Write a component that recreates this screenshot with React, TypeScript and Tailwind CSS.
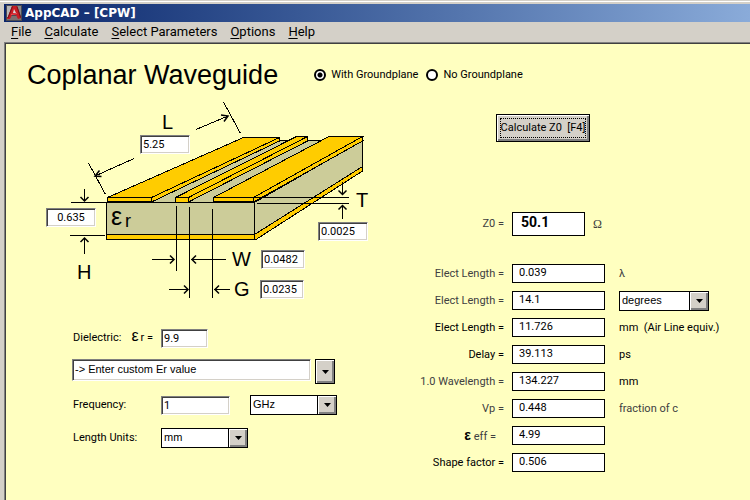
import { useState } from "react";
import type { ReactNode } from "react";

const MENU_ITEMS = ["File", "Calculate", "Select Parameters", "Options", "Help"];

const SUNKEN =
  "bg-white border border-t-[#808080] border-l-[#808080] border-b-white border-r-white shadow-[inset_1px_1px_0_#404040,inset_-1px_-1px_0_#d4d0c8] outline-none";
const RAISED =
  "bg-[#d4d0c8] shadow-[inset_1px_1px_0_#ffffff,inset_-2px_-2px_0_#808080]";

type Result = {
  id: string;
  label: ReactNode;
  value: string;
  unit?: string;
  muted?: boolean;
  mutedUnit?: boolean;
};

const RESULTS: Result[] = [
  { id: "elect-lambda", label: "Elect Length =", value: "0.039", unit: "λ", muted: true, mutedUnit: true },
  { id: "elect-angle", label: "Elect Length =", value: "14.1", muted: true },
  { id: "elect-air", label: "Elect Length =", value: "11.726", unit: "mm  (Air Line equiv.)" },
  { id: "delay", label: "Delay =", value: "39.113", unit: "ps" },
  { id: "wavelength", label: "1.0 Wavelength =", value: "134.227", unit: "mm", muted: true },
  { id: "vp", label: "Vp =", value: "0.448", unit: "fraction of c", muted: true, mutedUnit: true },
  {
    id: "eff",
    label: (
      <span className="pr-2">
        <span className="font-['Liberation_Sans',sans-serif] text-sm leading-none font-bold text-black">ε</span> eff =
      </span>
    ),
    value: "4.99",
    muted: true,
  },
  { id: "shape", label: "Shape factor =", value: "0.506" },
];

function AppIcon() {
  return (
    <svg width="16" height="16" viewBox="0 0 16 16" aria-hidden="true">
      <rect width="16" height="16" fill="#4a4a52" />
      <path d="M1 1h5L2 12H1z" fill="#b8b8b8" />
      <path d="M11 1h4v10z" fill="#8a8a8a" />
      <path d="M1 13h3l1-2h6l1 2h3v2H1z" fill="#7c7070" />
      <path d="M1 14 6 1h5l4 12-3 1-2-4H6l-2 4z" fill="#c81c24" />
      <path d="M7 8l1-4 2 4z" fill="#d8d8d8" />
      <path d="M6.500 1.500 2 13M11 1.500l3.500 11" stroke="#7a1018" fill="none" />
      <path d="M5 9.500l6-1" stroke="#e85058" fill="none" />
    </svg>
  );
}

function DropArrow() {
  return (
    <svg width="7" height="4" viewBox="0 0 7 4" aria-hidden="true">
      <path d="M0 0h7L3.500 4z" fill="#000" />
    </svg>
  );
}

type SelectBoxProps = {
  id: string;
  label: string;
  options: string[];
  className: string;
};

function SelectBox({ id, label, options, className }: SelectBoxProps) {
  return (
    <div className={`relative h-5 ${className}`}>
      <select
        id={id}
        aria-label={label}
        className="block h-full w-full appearance-none border border-black bg-white pb-0.5 pl-0.5 font-['Liberation_Sans',sans-serif] text-[11px] text-black outline-none"
      >
        {options.map((o) => (
          <option key={o}>{o}</option>
        ))}
      </select>
      <span
        className={`pointer-events-none absolute inset-y-0 right-0 flex w-5 items-center justify-center border border-black ${RAISED}`}
      >
        <DropArrow />
      </span>
    </div>
  );
}

type DimInputProps = { label: string; initial: string; className: string };

function DimInput({ label, initial, className }: DimInputProps) {
  const [value, setValue] = useState(initial);
  return (
    <input
      aria-label={label}
      value={value}
      onChange={(e) => setValue(e.target.value)}
      className={`absolute h-[19px] px-0.5 text-[11px] ${SUNKEN} ${className}`}
    />
  );
}

function Diagram() {
  return (
    <div className="relative ml-[41px] h-[208px] w-[340px]">
      <svg width="340" height="208" viewBox="46 96 340 208" role="img" aria-label="Coplanar waveguide cross-section">
        <g shapeRendering="crispEdges" stroke="#000" strokeWidth="1">
          {/* substrate */}
          <path d="M106.500 202.500L240 140.500H362.500L254.500 202.500z" fill="#cccc99" />
          <path d="M254.500 202.500L362.500 140.500V167L254.500 234.500z" fill="#cccc99" />
          <path d="M106.500 202.500H254.500V234.500H106.500z" fill="#cccc99" />
          {/* groundplane */}
          <path d="M106.500 234.500H254.500V239.500H106.500z" fill="#ffcc00" />
          <path d="M254.500 234.500L362.500 166.500V171L256 239.500H254.500z" fill="#ffcc00" />
          {/* left ground conductor */}
          <path d="M107.500 197.500L243.500 137.500H279.500L151.500 197.500z" fill="#ffcc00" />
          <path d="M151.500 197.500L279.500 137.500V141L151.500 202z" fill="#ffcc00" />
          <path d="M107.500 197.500H151.500V201.500H107.500z" fill="#ffcc00" />
          {/* centre conductor */}
          <path d="M175.500 197.500L296.500 136.500H307.500L188.500 197.500z" fill="#ffcc00" />
          <path d="M188.500 197.500L307.500 136.500V141L188.500 202z" fill="#ffcc00" />
          <path d="M175.500 197.500H188.500V202.500H175.500z" fill="#ffcc00" />
          {/* right ground conductor */}
          <path d="M213.500 197.500L329 136.500H362.500L253.500 197.500z" fill="#ffcc00" />
          <path d="M253.500 197.500L362.500 136.500V141L253.500 202z" fill="#ffcc00" />
          <path d="M213.500 197.500H253.500V201.500H213.500z" fill="#ffcc00" />
        </g>
        <g shapeRendering="crispEdges" stroke="#000" fill="none">
          {/* extension lines */}
          <path d="M88.500 163L105.500 194.500M223.500 102L240.500 133.500" />
          <path d="M71 202.500H106M70 235.500H105" />
          <path d="M254 197.500H349M257 203.500H349" />
          <path d="M176.500 206V271M189.500 207V298M212.500 209V298" />
          {/* arrow shafts */}
          <path d="M134 158.500L95 176M196 129.500L228 116" />
          <path d="M84.500 189V201M84.500 254V238M342.500 182V194M342.500 219V206" />
          <path d="M152 259.500H174M226 259.500H191M169 289.500H188M230 289.500H214" />
        </g>
        <g stroke="#000" strokeWidth="1.500" fill="none">
          <path d="M99.500 170.500L95 176L101.500 176.500M221 115L228 116L224 121.500" />
          <path d="M80.500 197L84.500 201L88.500 197M80.500 242L84.500 238L88.500 242" />
          <path d="M338.500 190.500L342.500 194.500L346.500 190.500M338.500 209.500L342.500 205.500L346.500 209.500" />
          <path d="M170 255.500L174 259.500L170 263.500M196 255.500L192 259.500L196 263.500" />
          <path d="M184 285.500L188 289.500L184 293.500M219 285.500L215 289.500L219 293.500" />
        </g>
        <g fontFamily="Liberation Sans, sans-serif" fontSize="20" fill="#000">
          <text x="162" y="129">L</text>
          <text x="77" y="279">H</text>
          <text x="232" y="266">W</text>
          <text x="234" y="296">G</text>
          <text x="356" y="207">T</text>
          <text x="111" y="225" fontSize="25">ε</text>
          <text x="125" y="227" fontSize="18">r</text>
        </g>
      </svg>
      <DimInput label="L" initial="5.25" className="top-[39px] left-[94px] w-[50px]" />
      <DimInput label="H" initial="0.635" className="top-[112px] left-0 w-[50px] text-center" />
      <DimInput label="T" initial="0.0025" className="top-[126px] left-[272px] w-[50px]" />
      <DimInput label="W" initial="0.0482" className="top-[154px] left-[215px] w-11" />
      <DimInput label="G" initial="0.0235" className="top-[184px] left-[214px] w-11" />
    </div>
  );
}

function MaterialForm() {
  const [er, setEr] = useState("9.9");
  const [material, setMaterial] = useState("-> Enter custom Er value");
  const [frequency, setFrequency] = useState("1");

  return (
    <div className="mt-6 ml-[67px] flex flex-col">
      <div className="flex items-center">
        <label htmlFor="er" className="flex w-[89px] items-center justify-between pr-2 pl-px">
          <span>Dielectric:</span>
          <span className="ml-2 pb-1 font-['Liberation_Sans',sans-serif] text-base leading-none">ε</span>
          <span>r =</span>
        </label>
        <input
          id="er"
          value={er}
          onChange={(e) => setEr(e.target.value)}
          className={`h-[19px] w-[47px] px-0.5 ${SUNKEN}`}
        />
      </div>
      <div className="mt-[11px] flex items-start gap-1">
        <input
          aria-label="Dielectric material"
          value={material}
          onChange={(e) => setMaterial(e.target.value)}
          className={`h-[22px] w-[239px] px-0.5 pb-0.5 font-['Liberation_Sans',sans-serif] ${SUNKEN}`}
        />
        <button
          type="button"
          aria-label="Show materials"
          className={`flex h-[25px] w-5 items-center justify-center border border-black ${RAISED}`}
        >
          <DropArrow />
        </button>
      </div>
      <div className="mt-[11px] flex items-center">
        <label htmlFor="frequency" className="w-[89px] pl-px">
          Frequency:
        </label>
        <input
          id="frequency"
          value={frequency}
          onChange={(e) => setFrequency(e.target.value)}
          className={`h-[19px] w-[69px] px-0.5 ${SUNKEN}`}
        />
        <SelectBox id="frequency-unit" label="Frequency unit" options={["GHz", "MHz", "kHz"]} className="ml-5 w-[87px]" />
      </div>
      <div className="mt-[13px] flex items-center">
        <label htmlFor="length-unit" className="w-[89px] pl-px">
          Length Units:
        </label>
        <SelectBox id="length-unit" label="Length Units" options={["mm", "mil", "inch"]} className="w-[87px]" />
      </div>
    </div>
  );
}

function Results() {
  return (
    <div className="flex flex-1 flex-col pt-[18px]">
      <button type="button" className={`ml-[89px] h-7 w-[94px] self-start border border-black p-[3px] ${RAISED}`}>
        <span className="flex h-full items-center justify-center border border-dotted border-black whitespace-pre">
          Calculate Z0  [F4]
        </span>
      </button>

      <div className="mt-[70px] flex items-center">
        <label htmlFor="z0" className="w-[97px] text-right text-[#404040]">
          Z0 =
        </label>
        <input
          id="z0"
          readOnly
          value="50.1"
          className="ml-2 h-6 w-[73px] border border-black bg-white pb-1 pl-2 font-['Roboto',sans-serif] text-sm font-bold outline-none"
        />
        <span className="ml-2 font-['Liberation_Serif',serif] text-xs text-[#404040]">Ω</span>
      </div>

      <div className="mt-7 flex flex-col gap-2">
        {RESULTS.map((r) => (
          <div key={r.id} className="flex h-[19px] items-center">
            <label
              htmlFor={r.id}
              className={r.muted ? "w-[97px] text-right text-[#404040]" : "w-[97px] text-right"}
            >
              {r.label}
            </label>
            <input
              id={r.id}
              readOnly
              value={r.value}
              className="ml-2 h-full w-[93px] border border-black bg-white pb-0.5 pl-1.5 outline-none"
            />
            {r.id === "elect-angle" ? (
              <SelectBox id="angle-unit" label="Angle unit" options={["degrees", "radians"]} className="ml-3.5 w-[90px]" />
            ) : (
              <span className={r.mutedUnit ? "ml-3.5 whitespace-pre text-[#404040]" : "ml-3.5 whitespace-pre"}>
                {r.unit}
              </span>
            )}
          </div>
        ))}
      </div>
    </div>
  );
}

export default function App() {
  const [groundplane, setGroundplane] = useState(true);
  const radio =
    "size-3 appearance-none rounded-full border-2 border-black bg-white checked:bg-[radial-gradient(circle,#000_2px,#fff_3px)]";

  return (
    <div className="flex min-h-screen flex-col bg-[#d4d0c8] pl-1 font-['Roboto','Liberation_Sans',sans-serif] text-[11px] leading-[14px] text-black">
      {/* Title bar */}
      <div className="-ml-1 pt-px pb-0.5">
        <div className="h-px bg-white" />
      </div>
      <header className="flex h-[18px] items-center gap-[3px] bg-linear-to-r from-[#0a246a] to-[#8aabd9] pl-0.5">
        <AppIcon />
        <h1 className="font-['DejaVu_Sans',sans-serif] text-xs font-bold text-white">AppCAD – [CPW]</h1>
      </header>

      {/* Menu */}
      <nav className="flex h-5 items-center gap-[13px] pl-[7px] text-[13px]">
        {MENU_ITEMS.map((item) => (
          <button key={item} type="button">
            <span className="underline underline-offset-2">{item[0]}</span>
            {item.slice(1)}
          </button>
        ))}
      </nav>

      <main className="flex-1 border-t border-l border-[#808080] bg-[#ffffc0] shadow-[inset_1px_1px_0_#404040]">
        <div className="flex items-center pt-3.5 pl-[22px]">
          <h2 className="font-['Liberation_Sans',sans-serif] text-[27px] leading-9">Coplanar Waveguide</h2>
          <div className="ml-9 flex items-center gap-2">
            <label className="flex items-center gap-[5px]">
              <input type="radio" name="groundplane" checked={groundplane} onChange={() => setGroundplane(true)} className={radio} />
              With Groundplane
            </label>
            <label className="flex items-center gap-[5px]">
              <input type="radio" name="groundplane" checked={!groundplane} onChange={() => setGroundplane(false)} className={radio} />
              No Groundplane
            </label>
          </div>
        </div>

        <div className="flex pt-[3px]">
          <div className="w-[402px] shrink-0">
            <Diagram />
            <MaterialForm />
          </div>
          <Results />
        </div>
      </main>
    </div>
  );
}
